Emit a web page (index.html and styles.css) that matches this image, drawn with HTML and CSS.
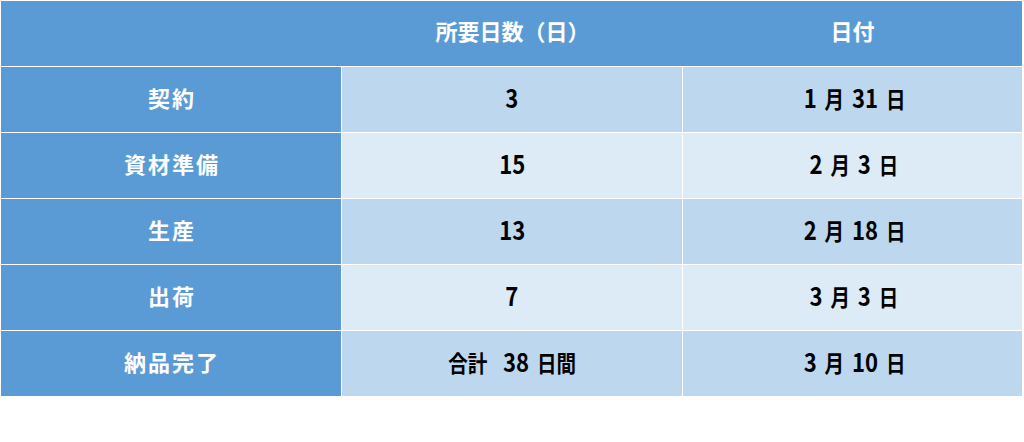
FILE: index.html
```html
<!DOCTYPE html>
<html lang="ja">
<head>
<meta charset="utf-8">
<link rel="stylesheet" href="styles.css">
</head>
<body>
<div class="table">
  <div class="head">
    <div class="hcell"></div>
    <div class="hcell">所要日数（日）</div>
    <div class="hcell">日付</div>
  </div>
  <div class="row odd">
    <div class="label">契約</div>
    <div class="cell"><span class="txt"><span class="num">3</span></span></div>
    <div class="cell"><span class="txt"><span class="num">1</span> 月 <span class="num">31</span> 日</span></div>
  </div>
  <div class="row even">
    <div class="label">資材準備</div>
    <div class="cell"><span class="txt"><span class="num">15</span></span></div>
    <div class="cell"><span class="txt"><span class="num">2</span> 月 <span class="num">3</span> 日</span></div>
  </div>
  <div class="row odd">
    <div class="label">生産</div>
    <div class="cell"><span class="txt"><span class="num">13</span></span></div>
    <div class="cell"><span class="txt"><span class="num">2</span> 月 <span class="num">18</span> 日</span></div>
  </div>
  <div class="row even">
    <div class="label">出荷</div>
    <div class="cell"><span class="txt"><span class="num">7</span></span></div>
    <div class="cell"><span class="txt"><span class="num">3</span> 月 <span class="num">3</span> 日</span></div>
  </div>
  <div class="row odd">
    <div class="label">納品完了</div>
    <div class="cell"><span class="txt">合計  <span class="num wide">38</span> 日間</span></div>
    <div class="cell"><span class="txt"><span class="num">3</span> 月 <span class="num">10</span> 日</span></div>
  </div>
</div>
</body>
</html>
```

FILE: styles.css
```css
html, body {
  margin: 0;
  padding: 0;
  background: #ffffff;
}
.table {
  width: 1022px;
  padding: 1px 0 0 1px;
  box-sizing: border-box;
  display: flex;
  flex-direction: column;
  gap: 1px;
  background: #ffffff;
}
.head {
  display: grid;
  grid-template-columns: 341px 341px 339px;
  height: 65px;
  background: #5b9bd5;
}
.hcell {
  display: flex;
  align-items: center;
  justify-content: center;
  color: #ffffff;
  font-family: "Noto Sans CJK JP", sans-serif;
  font-weight: 700;
  font-size: 22px;
  padding-bottom: 8px;
}
.row {
  display: grid;
  grid-template-columns: 340px 340px 339px;
  gap: 1px;
  height: 65px;
}
.label, .cell {
  display: flex;
  align-items: center;
  justify-content: center;
}
.label {
  background: #5b9bd5;
  color: #ffffff;
  font-family: "Noto Sans CJK JP", sans-serif;
  font-weight: 700;
  font-size: 22px;
  letter-spacing: 2px;
  padding-left: 2px;
  padding-bottom: 6px;
}
.cell {
  color: #000000;
  font-family: "Noto Sans CJK JP", sans-serif;
  font-weight: 700;
  font-size: 23px;
  padding-bottom: 5px;
}
.txt {
  display: inline-block;
  white-space: pre;
  line-height: 1;
  transform: scaleX(0.85);
}
.num {
  font-size: 26px;
  margin: 0 4px;
}
.num.wide {
  margin: 0 4px 0 8px;
}
.odd .cell { background: #bdd7ee; }
.even .cell { background: #ddebf7; }
```
